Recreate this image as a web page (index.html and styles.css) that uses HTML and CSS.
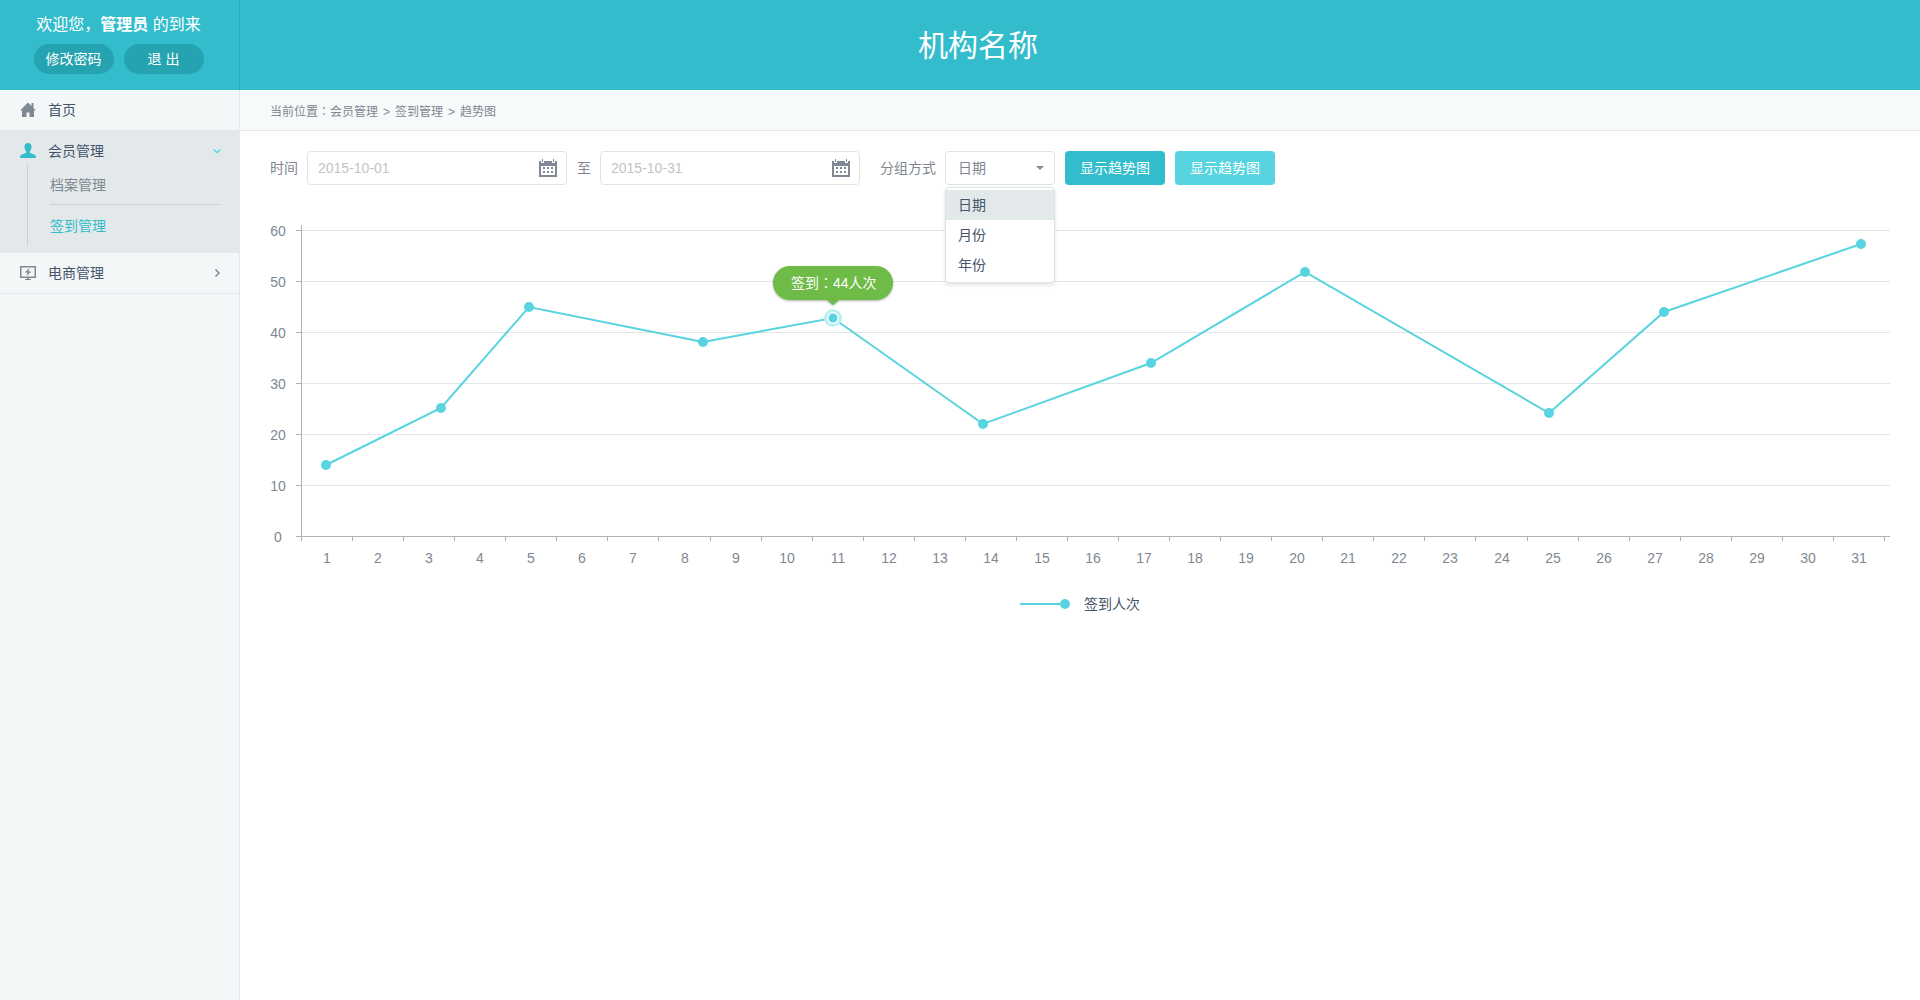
FILE: index.html
```html
<!DOCTYPE html>
<html lang="zh-CN">
<head>
<meta charset="utf-8">
<meta name="viewport" content="width=device-width, initial-scale=1">
<title>趋势图</title>
<link rel="stylesheet" href="styles.css">
</head>
<body>
<div class="layout">
  <aside class="sidebar">
    <div class="welcome">
      <p class="welcome-text">欢迎您，<strong>管理员</strong> 的到来</p>
      <div class="welcome-actions">
        <button type="button" class="pill">修改密码</button>
        <button type="button" class="pill">退 出</button>
      </div>
    </div>
    <nav class="menu">
      <div class="menu-group">
        <a href="#" class="menu-link">
          <svg class="menu-icon" viewBox="0 0 16 16"><path d="M8 0.500L0 8.500h2V15h4.500v-4.500h3V15H14V8.500h2L13.500 6V1h-2v3z"/></svg>
          <span class="menu-label">首页</span>
        </a>
      </div>
      <div class="menu-group open">
        <a href="#" class="menu-link">
          <svg class="menu-icon" viewBox="0 0 16 16"><path d="M8 0C5.800 0 4.500 1.500 4.500 3.800C4.500 5.800 5.200 7.500 6.200 8.500C6.300 9.800 5.800 10.100 4.500 10.600C2 11.500 0 12 0 14.200C0 15 0.300 15 1 15H15C15.700 15 16 15 16 14.200C16 12 14 11.500 11.500 10.600C10.200 10.100 9.700 9.800 9.800 8.500C10.800 7.500 11.500 5.800 11.500 3.800C11.500 1.500 10.200 0 8 0z"/></svg>
          <span class="menu-label">会员管理</span>
          <svg class="menu-arrow" viewBox="0 0 8 8"><path d="M0.500 2.500L4 5.500L7.500 2.500"/></svg>
        </a>
        <ul class="submenu">
          <li><a href="#">档案管理</a></li>
          <li><a href="#" class="current">签到管理</a></li>
        </ul>
      </div>
      <div class="menu-group">
        <a href="#" class="menu-link">
          <svg class="menu-icon" viewBox="0 0 16 16"><path fill-rule="evenodd" d="M0 1h16v12H9v1h2v1H5v-1h2v-1H0zM1.500 2.500v9h13v-9z"/><path d="M9.500 3L4.500 7.500h3L6.500 11L11.500 6.500h-3z"/></svg>
          <span class="menu-label">电商管理</span>
          <svg class="menu-arrow" viewBox="0 0 8 8"><path d="M2.500 0.500L6 4L2.500 7.500"/></svg>
        </a>
      </div>
    </nav>
  </aside>

  <div class="page">
    <header class="topbar"><h1>机构名称</h1></header>
    <nav class="breadcrumb" aria-label="当前位置">
      <span>当前位置<span class="punct" lang="zh-TW">：</span><a href="#">会员管理</a></span>
      <span>&gt;</span>
      <a href="#">签到管理</a>
      <span>&gt;</span>
      <span>趋势图</span>
    </nav>
    <main class="content">
      <form class="filters">
        <div class="field">
          <label for="from">时间</label>
          <div class="date">
            <input id="from" type="text" placeholder="2015-10-01">
            <svg class="calendar" viewBox="0 0 18 18"><path fill-rule="evenodd" d="M0 2h2v2h3V2h8v2h3V2h2v16H0zM2 7v9h14V7z"/><path d="M3 0h1v3H3zM14 0h1v3h-1zM4 8h2v2H4zM8 8h2v2H8zM12 8h2v2h-2zM4 12h2v2H4zM8 12h2v2H8zM12 12h2v2h-2z"/></svg>
          </div>
        </div>
        <div class="field">
          <label for="to">至</label>
          <div class="date">
            <input id="to" type="text" placeholder="2015-10-31">
            <svg class="calendar" viewBox="0 0 18 18"><path fill-rule="evenodd" d="M0 2h2v2h3V2h8v2h3V2h2v16H0zM2 7v9h14V7z"/><path d="M3 0h1v3H3zM14 0h1v3h-1zM4 8h2v2H4zM8 8h2v2H8zM12 8h2v2h-2zM4 12h2v2H4zM8 12h2v2H8zM12 12h2v2h-2z"/></svg>
          </div>
        </div>
        <div class="field group-field">
          <label for="group">分组方式</label>
          <div class="picker">
            <select id="group">
              <option>日期</option>
              <option>月份</option>
              <option>年份</option>
            </select>
            <ul class="options">
              <li class="selected">日期</li>
              <li>月份</li>
              <li>年份</li>
            </ul>
          </div>
        </div>
        <button type="button" class="btn">显示趋势图</button>
        <button type="button" class="btn btn-light">显示趋势图</button>
      </form>

      <figure class="chart">
        <svg id="plot" class="plot" viewBox="0 0 1620 345" role="img" aria-label="签到人次">
          <g id="grid"></g>
          <g id="axis"></g>
          <g id="labels"></g>
          <g id="series"></g>
          <g class="tip">
            <path d="M520 46h86a17 17 0 0 1 0 34h-37l-6 5l-6 -5h-37a17 17 0 0 1 0 -34z"/>
            <text x="521" y="68">签到<tspan class="punct" lang="zh-TW">：</tspan>44人次</text>
          </g>
        </svg>
        <figcaption class="legend">
          <svg class="legend-mark" viewBox="0 0 50 10"><path d="M0 5H45"/><circle cx="45" cy="5" r="5"/></svg>
          <span>签到人次</span>
        </figcaption>
      </figure>
    </main>
  </div>
</div>
<script src="chart.js"></script>
</body>
</html>
```
FILE: styles.css
```css
* { box-sizing: border-box; }

body {
  margin: 0;
  background: #fff;
  color: #808791;
  font: 14px/20px "Liberation Sans", "Noto Sans CJK SC", sans-serif;
}

a { color: inherit; text-decoration: none; }
ul { list-style: none; margin: 0; padding: 0; }
button, input, select { font: inherit; }
button { border: 0; padding: 0; color: #fff; cursor: pointer; }
.punct { font-family: "Noto Sans CJK TC", sans-serif; line-height: 1; }

.layout {
  display: grid;
  grid-template-columns: 240px 1fr;
  min-height: 100vh;
}

/* Sidebar */
.sidebar { background: #f3f7f8; border-right: 1px solid #e3e9ea; }

.welcome {
  display: flex;
  flex-direction: column;
  align-items: center;
  gap: 9px;
  height: 90px;
  margin-right: -1px;
  padding: 15px 2px 0 0;
  background: #33bdcc;
  border-right: 1px solid #2aaebc;
  color: #fff;
}
.welcome-text { margin: 0; font-size: 16px; }
.welcome-actions { display: flex; gap: 10px; }
.pill { width: 80px; height: 30px; border-radius: 15px; background: #25a3b1; }

.menu-group { border-bottom: 1px solid #e3e9ea; }
.menu-link {
  display: flex;
  align-items: center;
  gap: 12px;
  height: 40px;
  padding: 0 18px 0 20px;
  color: #45546a;
}
.menu-icon { width: 16px; height: 16px; fill: #808994; }
.menu-label { flex: 1; }
.menu-arrow { width: 8px; height: 8px; fill: none; stroke: #808994; stroke-width: 1.500; }
.open { background: #e3e9ea; margin-right: -1px; padding-bottom: 6px; }
.open .menu-link { padding-right: 19px; }
.open .menu-icon { fill: #33bdcc; }
.open .menu-arrow { stroke: #57d4df; }
.submenu {
  margin: -7px 20px 0 27px;
  padding: 0 0 2px 22px;
  border-left: 1px solid #cbd1d6;
}
.submenu li { height: 40px; line-height: 42px; }
.submenu li + li { border-top: 1px solid #cbd1d6; }
.submenu .current { color: #33bdcc; }

/* Page header */
.page { min-width: 0; }
.topbar {
  display: flex;
  justify-content: center;
  align-items: center;
  height: 90px;
  padding: 2px 204px 0 0;
  background: #33bdcc;
  color: #fff;
}
.topbar h1 { margin: 0; font-size: 30px; line-height: 40px; font-weight: 400; }
.breadcrumb {
  display: flex;
  align-items: center;
  gap: 5px;
  height: 41px;
  padding: 4px 30px 0;
  background: #f7fafb;
  border-bottom: 1px solid #e3e9ea;
  font-size: 12px;
}

/* Filters */
.content { padding: 20px 30px; }
.filters, .field { display: flex; align-items: center; }
.filters { gap: 10px; }
.field { gap: 9px; }
.date { position: relative; width: 260px; }
.date input {
  width: 100%;
  height: 34px;
  padding: 0 40px 0 10px;
  border: 1px solid #dde4e5;
  border-radius: 4px;
  color: #45546a;
}
.date input::placeholder { color: #c0c4c9; }
.calendar { position: absolute; right: 10px; top: 8px; width: 18px; height: 18px; fill: #808994; }
.group-field { margin-left: 10px; }
.picker { position: relative; width: 110px; }
.picker::after {
  content: "";
  position: absolute;
  right: 11px;
  top: 15px;
  border: 4px solid transparent;
  border-top-color: #808994;
  border-bottom: 0;
}
.picker select {
  display: block;
  width: 100%;
  height: 34px;
  padding: 0 12px;
  appearance: none;
  background: #fff;
  border: 1px solid #dde4e5;
  border-radius: 4px;
  color: #808791;
}
.options {
  position: absolute;
  top: 36px;
  left: 0;
  z-index: 1;
  width: 100%;
  padding: 2px 0;
  background: #fff;
  border: 1px solid #dde4e5;
  border-radius: 4px;
  box-shadow: 0 2px 4px rgba(0, 0, 0, 0.12);
  color: #45546a;
}
.options li { padding: 0 12px; line-height: 30px; }
.options .selected { background: #e3e9ea; }
.btn { width: 100px; height: 34px; border-radius: 4px; background: #33bdcc; }
.btn-light { background: #57d4df; }

/* Chart */
.chart { margin: 35px 0 0; }
.plot { display: block; width: 100%; height: auto; overflow: visible; fill: #808791; }
.grid-line { stroke: #e3e6e8; }
.axis-line { stroke: #abb2ba; }
.plot .series-line { fill: none; stroke: #57d4df; stroke-width: 2; }
.point { fill: #57d4df; }
.halo { fill: #bdeef2; }
.ring { fill: #fff; }
.tip path { fill: #6fbb47; filter: drop-shadow(0 1px 1px rgba(0, 0, 0, 0.3)); }
.tip text { fill: #fff; }
.legend {
  display: flex;
  justify-content: center;
  align-items: center;
  gap: 14px;
  margin-top: 29px;
  color: #45546a;
}
.legend-mark { width: 50px; height: 10px; fill: #57d4df; stroke: #57d4df; stroke-width: 2; }
.legend-mark circle { stroke: none; }
```
FILE: chart.js
```js
// Draws the grid, axes, labels and line of the check-in chart.
const NS = 'http://www.w3.org/2000/svg';
const LEFT = 31, BOTTOM = 316, RIGHT = 1620, ROW = 51, DAY = 1583 / 31;

function add(parent, tag, attrs, text) {
  const el = document.createElementNS(NS, tag);
  for (const key in attrs) el.setAttribute(key, attrs[key]);
  if (text !== undefined) el.textContent = text;
  document.getElementById(parent).appendChild(el);
}
function line(parent, cls, x1, y1, x2, y2) {
  add(parent, 'path', { class: cls, d: `M${x1} ${y1}L${x2} ${y2}` });
}

for (let i = 0; i <= 6; i++) {
  const y = BOTTOM - i * ROW + 0.5;
  if (i) line('grid', 'grid-line', LEFT, y, RIGHT, y);
  line('axis', 'axis-line', LEFT - 5, y, LEFT, y);
  add('labels', 'text', { x: 8, y: y + 5, 'text-anchor': 'middle' }, i * 10);
}
line('axis', 'axis-line', LEFT + 0.5, 5, LEFT + 0.5, BOTTOM + 5);
line('axis', 'axis-line', LEFT, BOTTOM + 0.5, RIGHT, BOTTOM + 0.5);
for (let d = 1; d <= 31; d++) {
  const x = Math.round(LEFT + d * DAY) + 0.5;
  line('axis', 'axis-line', x, BOTTOM, x, BOTTOM + 5);
  add('labels', 'text', { x: Math.round(x - DAY / 2 + 0.5), y: BOTTOM + 27, 'text-anchor': 'middle' }, d);
}

const points = [[56, 245], [171, 188], [259, 87], [433, 122], [563, 98], [713, 204],
  [881, 143], [1035, 52], [1279, 193], [1394, 92], [1591, 24]];
add('series', 'polyline', { class: 'series-line', points: points.join(' ') });
points.forEach(([cx, cy], i) => {
  if (i === 4) {
    add('series', 'circle', { class: 'halo', cx, cy, r: 9 });
    add('series', 'circle', { class: 'ring', cx, cy, r: 6 });
  }
  add('series', 'circle', { class: 'point', cx, cy, r: i === 4 ? 4.5 : 5 });
});
```
